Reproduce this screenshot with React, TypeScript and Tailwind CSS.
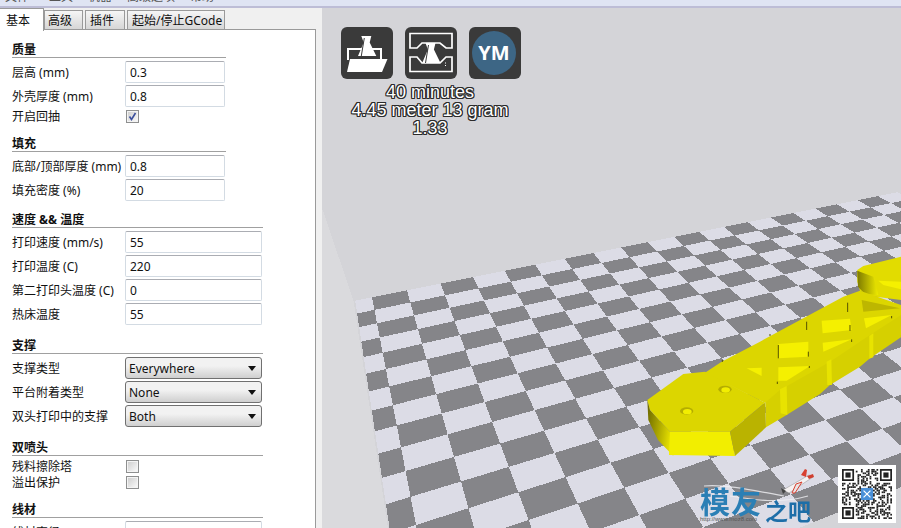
import React from 'react';

const project = (u: number, v: number): [number, number] => {
  // board corners: u 0..7, v 0..12 read off the reference
  const [x0, y0, x1, y1, x2, y2, x3, y3] = [372, 297.3, 593.3, 253, 733, 423.6, 416, 525];
  const dx1 = x1 - x2, dx2 = x3 - x2, sx = x0 - x1 + x2 - x3;
  const dy1 = y1 - y2, dy2 = y3 - y2, sy = y0 - y1 + y2 - y3;
  const den = dx1 * dy2 - dx2 * dy1;
  const g = (sx * dy2 - dx2 * sy) / den;
  const h = (dx1 * sy - sx * dy1) / den;
  const s = u / 7, t = v / 12;
  const w = g * s + h * t + 1;
  return [
    ((x1 - x0 + g * x1) * s + (x3 - x0 + h * x3) * t + x0) / w,
    ((y1 - y0 + g * y1) * s + (y3 - y0 + h * y3) * t + y0) / w,
  ];
};

const quad = (a: number, b: number, c: number, d: number) =>
  [project(a, c), project(b, c), project(b, d), project(a, d)].map((p) => p.join(',')).join(' ');

function Board() {
  const cells = [];
  for (let i = -1; i < 20; i++) {
    for (let j = 0; j < 16; j++) {
      if ((i + j) % 2 !== 0) continue;
      cells.push(<polygon key={`${i}-${j}`} points={quad(Math.max(i, -0.47), i + 1, j, j + 1)} fill="#858589" />);
    }
  }
  return (
    <g shapeRendering="crispEdges">
      <polygon points="322,208 353.5,300.5 388,528 322,528" fill="#dadadd" />
      <polygon points={quad(-0.47, 20, 0, 16)} fill="#dcdce6" />
      {cells}
    </g>
  );
}

function Model() {
  return (
    <g transform="translate(630 250) scale(0.3333)">
      <defs>
        <linearGradient id="leftWall" x1="0" x2="1" y1="0" y2="0.3">
          <stop offset="0" stopColor="#686400" />
          <stop offset="1" stopColor="#e6e000" />
        </linearGradient>
        <linearGradient id="farWall" x1="0" x2="1" y1="0" y2="0">
          <stop offset="0" stopColor="#7d7a00" />
          <stop offset="1" stopColor="#efeb00" />
        </linearGradient>
      </defs>
      {/* far end of the part */}
      <polygon points="682,60 700,48 813,20 813,150 720,138 690,122 682,95" fill="#e2dc00" />
      <polygon points="682,62 730,80 745,135 705,132 684,110" fill="url(#farWall)" />
      <polygon points="745,92 813,95 813,118 760,105" fill="#f5f000" />
      {/* arm side wall */}
      <polygon points="405,430 600,310 720,230 813,170 813,262 720,325 690,350 600,405 570,432 470,495 408,532" fill="#d6d000" />
      {/* arm top */}
      <polygon points="275,335 390,275 520,205 640,140 690,122 813,165 813,195 720,255 600,335 450,420 405,458 225,368" fill="#dcd600" />
      <polygon points="450,418 470,408 472,495 452,490" fill="#e8e300" />
      <polygon points="590,335 604,328 606,405 592,405" fill="#e8e300" />
      <polygon points="718,258 730,250 730,322 718,326" fill="#e8e300" />
      {/* lattice holes */}
      <polygon points="445,282 535,275 535,320 445,325" fill="#f5f000" />
      <polygon points="445,352 540,348 470,392 445,392" fill="#f5f000" />
      <polygon points="575,212 660,206 665,240 578,250" fill="#f5f000" />
      <polygon points="578,278 665,268 580,305" fill="#f5f000" />
      <polygon points="702,205 785,195 708,235" fill="#f5f000" />
      <polygon points="350,355 395,353 395,378" fill="#f5f000" />
      <polygon points="695,150 810,175 700,185" fill="#bdb600" />
      <g stroke="#555200" strokeWidth="3">
        <path d="M445 285V325M535 305V320M442 395V402M538 348V354M660 225V243M665 268V276M785 198V205M653 158V186M530 215V240M277 330V336M420 252V258" />
      </g>
      {/* end plate */}
      <polygon points="52,450 160,372 225,365 405,458 300,545 120,545 60,480" fill="#dcd600" />
      <polygon points="52,450 60,480 120,545 130,618 84,570 55,510" fill="url(#leftWall)" />
      <polygon points="120,545 300,545 315,618 117,615" fill="#f2ee00" />
      <polygon points="300,545 405,458 408,532 315,618" fill="#bab300" />
      <ellipse cx="170" cy="483" rx="20" ry="11" fill="#b4ad00" />
      <ellipse cx="172" cy="485" rx="13" ry="8" fill="#f2ee00" />
      <ellipse cx="285" cy="418" rx="20" ry="11" fill="#b4ad00" />
      <ellipse cx="287" cy="420" rx="13" ry="8" fill="#f2ee00" />
    </g>
  );
}

function Flask({ x, y }: { x: number; y: number }) {
  return (
    <g transform={`translate(${x} ${y})`}>
      <polygon points="0,0 10,0 8.400,6.600 15,20 -3.300,20 2.400,6.600" fill="#fff" />
      <path d="M3 2L0 20" stroke="#3a3a3a" strokeWidth="1" />
    </g>
  );
}

function IconButton({ children }: { children: React.ReactNode }) {
  return <div className="w-[52px] h-[52px] rounded-[6px] bg-[#3a3a3a] relative">{children}</div>;
}

function QrCode() {
  const size = 29;
  const inFinder = (x: number, y: number) => (x < 8 && y < 8) || (x > size - 9 && y < 8) || (x < 8 && y > size - 9);
  const dots = [];
  let seed = 37;
  for (let y = 0; y < size; y++) {
    for (let x = 0; x < size; x++) {
      seed = (seed * 73 + 41) % 1009;
      if (!inFinder(x, y) && seed % 2 === 0) dots.push(<rect key={`${x}-${y}`} x={x} y={y} width="1" height="1" />);
    }
  }
  const finder = (x: number, y: number) => (
    <g transform={`translate(${x} ${y})`} key={`${x}${y}`}>
      <path d="M0 0H7V7H0ZM1 1V6H6V1Z" fillRule="evenodd" />
      <rect x="2" y="2" width="3" height="3" />
    </g>
  );
  return (
    <div className="absolute left-[516px] top-[457px] w-[58px] h-[58px] bg-white p-[4px]">
      <svg viewBox="0 0 29 29" className="w-[50px] h-[50px]" fill="#222">
        {dots}
        {finder(0, 0)}
        {finder(22, 0)}
        {finder(0, 22)}
        <rect x="11" y="11" width="7" height="7" fill="#4a90d8" />
        <path d="M12.5 12.5L16.5 16.5M16.5 12.5L12.5 16.5" stroke="#fff" strokeWidth="0.7" />
      </svg>
    </div>
  );
}

function Watermark() {
  return (
    <>
      <svg viewBox="0 0 130 50" className="absolute left-[378px] top-[458px] w-[130px] h-[50px]">
        <path d="M4 20C30 18 60 26 84 30M30 30C55 34 80 38 108 30" stroke="#f0f0f4" strokeWidth="1.200" fill="none" opacity="0.8" />
        <g transform="translate(81 2)">
          <path d="M2 22L28 7L32 9L8 25Z" fill="#f6f2f2" stroke="#777" strokeWidth="0.4" />
          <path d="M15 16L11 25L14 25L21 14Z" fill="#e8e4e4" stroke="#d84030" strokeWidth="1" />
          <path d="M20 7L24 1L26 2L25 9Z" fill="#d84030" />
          <path d="M0 20L5 23L2 26Z" fill="#444" />
          <path d="M26 8L32 6L33 9L28 11Z" fill="#d04030" />
        </g>
      </svg>
      <span className="absolute left-[378px] top-[477px] text-[30px] leading-[30px] font-bold text-[#2b7fb5] tracking-[1px] font-['Noto_Sans_CJK_SC',sans-serif] blur-[0.4px] whitespace-nowrap">模友</span>
      <span className="absolute left-[443px] top-[490px] text-[23px] leading-[24px] font-bold text-[#1d6ea8] font-['Noto_Sans_CJK_SC',sans-serif] blur-[0.4px] whitespace-nowrap">之吧</span>
      <span className="absolute left-[378px] top-[507px] text-[6px] leading-[8px] text-[#555] font-['Liberation_Sans',sans-serif] whitespace-nowrap">http://www.moz8.com</span>
    </>
  );
}

function Canvas() {
  return (
    <div className="relative flex-1 bg-[#d4d4d8] overflow-hidden">
      <svg viewBox="322 8 579 520" className="absolute inset-0 w-[579px] h-[520px]">
        <Board />
        <Model />
      </svg>
      <div className="absolute left-[19px] top-[19px] flex gap-[12px]">
        <IconButton>
          <svg viewBox="0 0 52 52" className="w-[52px] h-[52px]">
            <path d="M7 33V22H40V33" stroke="#fff" strokeWidth="2" fill="none" />
            <Flask x={20.300} y={9} />
            <polygon points="9,32 46.500,32 41,45 6,45" fill="#fff" />
          </svg>
        </IconButton>
        <IconButton>
          <svg viewBox="0 0 52 52" className="w-[52px] h-[52px]">
            <path d="M5 6.500H47V21H41L35 16H17L12 21H5Z" stroke="#fff" strokeWidth="1.700" fill="none" />
            <path d="M5 30H12L17 36H35L41 30H47V44.500H5Z" stroke="#fff" strokeWidth="1.700" fill="none" />
            <Flask x={20.500} y={16} />
            <path d="M40 36H41M40 38.500H41" stroke="#fff" strokeWidth="1" />
          </svg>
        </IconButton>
        <IconButton>
          <div className="absolute left-[3px] top-[4px] w-[44px] h-[44px] rounded-full bg-[#3d6685] flex items-center justify-center text-white font-bold text-[20px] font-['Open_Sans',sans-serif]">YM</div>
        </IconButton>
      </div>
      <div className="absolute left-[8px] top-[75px] w-[200px] text-center text-[18px] leading-[18px] text-white font-['Liberation_Sans',sans-serif] [text-shadow:1px_0_#2a2a2a,-1px_0_#2a2a2a,0_1px_#2a2a2a,0_-1px_#2a2a2a,1px_1px_#2a2a2a,-1px_-1px_#2a2a2a,1px_-1px_#2a2a2a,-1px_1px_#2a2a2a]">
        <div>40 minutes</div>
        <div>4.45 meter 13 gram</div>
        <div>1.33</div>
      </div>
      <Watermark />
      <QrCode />
    </div>
  );
}

function Check({ checked }: { checked?: boolean }) {
  return (
    <div className="w-[13px] h-[13px] border border-[#8e8f8f] p-[1px] bg-[#f4f4f4]">
      <div className="w-full h-full bg-gradient-to-br from-[#d0d0d0] to-[#f8f8f8] flex items-center justify-center">
        {checked && (
          <svg viewBox="0 0 9 9" className="w-[9px] h-[9px]">
            <path d="M1.500 4.500L3.500 7.500L7.500 1" stroke="#3b4f9c" strokeWidth="1.600" fill="none" />
          </svg>
        )}
      </div>
    </div>
  );
}

function Row({ label, children }: { label: string; children: React.ReactNode }) {
  return (
    <div className="flex items-center h-[24px] pr-[1px]">
      <div className="w-[113px] shrink-0 whitespace-nowrap pt-[2px]">{label}</div>
      {children}
    </div>
  );
}

function Field({ label, value }: { label: string; value: string }) {
  return (
    <Row label={label}>
      <input
        readOnly
        value={value}
        className="flex-1 min-w-0 h-[22px] px-[4px] border border-[#d3dbe3] border-t-[#abadb3] rounded-[2px] bg-white outline-none"
      />
    </Row>
  );
}

function Dropdown({ label, value }: { label: string; value: string }) {
  return (
    <Row label={label}>
      <div className="flex-1 h-[22px] pl-[3px] pr-[5px] flex items-center justify-between border border-[#707070] rounded-[3px] bg-gradient-to-b from-[#f2f2f2] from-40% to-[#cfcfcf]">
        <span className="pt-[1px]">{value}</span>
        <svg viewBox="0 0 8 5" className="w-[8px] h-[5px]">
          <polygon points="0,0 8,0 4,5" fill="#111" />
        </svg>
      </div>
    </Row>
  );
}

function CheckRow({ label, checked }: { label: string; checked?: boolean }) {
  return (
    <div className="flex items-center h-[16px]">
      <div className="w-[114px] shrink-0 pt-[2px]">{label}</div>
      <Check checked={checked} />
    </div>
  );
}

function Section({ title, wide, className, children }: { title: string; wide?: boolean; className: string; children: React.ReactNode }) {
  return (
    <section className={`${wide ? 'w-[251px]' : 'w-[214px]'} ${className}`}>
      <h3 className="h-[16px] leading-[16px] font-bold border-b border-[#a0a0a0] mb-[2px]">{title}</h3>
      {children}
    </section>
  );
}

function Tab({ label, className }: { label: string; className: string }) {
  return (
    <div className={`h-[19px] flex items-center pt-[2px] border border-b-0 border-[#9a9a9a] bg-gradient-to-b from-[#f6f6f6] to-[#d6d6d6] ${className}`}>
      {label}
    </div>
  );
}

function SettingsPane() {
  return (
    <div className="w-[322px] bg-[#f0f0f0] flex flex-col overflow-hidden">
      <div className="h-[21px] flex items-end relative">
        <div className="absolute left-0 top-0 w-[44px] h-[23px] bg-white border-t border-r border-[#9a9a9a] flex items-center pl-[6px] pt-[1px] z-10">基本</div>
        <div className="w-[44px] shrink-0" />
        <div className="flex gap-[2px]">
          <Tab label="高级" className="w-[39px] pl-[3px]" />
          <Tab label="插件" className="w-[40px] pl-[4px]" />
          <Tab label="起始/停止GCode" className="w-[98px] pl-[4px]" />
        </div>
      </div>
      <div className="w-[316px] flex-1 bg-white border-t border-r border-[#9a9a9a] pl-[12px] overflow-hidden">
        <Section title="质量" className="mt-[12px]">
          <Field label="层高 (mm)" value="0.3" />
          <Field label="外壳厚度 (mm)" value="0.8" />
          <CheckRow label="开启回抽" checked />
        </Section>
        <Section title="填充" className="mt-[12px]">
          <Field label="底部/顶部厚度 (mm)" value="0.8" />
          <Field label="填充密度 (%)" value="20" />
        </Section>
        <Section title="速度 && 温度" wide className="mt-[10px]">
          <Field label="打印速度 (mm/s)" value="55" />
          <Field label="打印温度 (C)" value="220" />
          <Field label="第二打印头温度 (C)" value="0" />
          <Field label="热床温度" value="55" />
        </Section>
        <Section title="支撑" wide className="mt-[12px]">
          <Dropdown label="支撑类型" value="Everywhere" />
          <Dropdown label="平台附着类型" value="None" />
          <Dropdown label="双头打印中的支撑" value="Both" />
        </Section>
        <Section title="双喷头" wide className="mt-[12px]">
          <CheckRow label="残料擦除塔" />
          <CheckRow label="溢出保护" />
        </Section>
        <Section title="线材" wide className="mt-[12px]">
          <Field label="线材直径 (mm)" value="1.75" />
        </Section>
      </div>
    </div>
  );
}

export default function App() {
  return (
    <div className="w-[901px] h-[528px] flex flex-col overflow-hidden bg-[#f0f0f0] text-[12px] text-[#111] font-['Noto_Sans','Noto_Sans_CJK_SC',sans-serif]">
      <div className="h-[8px] shrink-0 bg-[#dfe4f3] border-b-2 border-[#bdbdd6] overflow-hidden">
        <div className="flex -mt-[10px] text-[#555] leading-[14px]">
          <span className="ml-[5px]">文件</span>
          <span className="ml-[20px]">工具</span>
          <span className="ml-[15px]">机器</span>
          <span className="ml-[15px]">高级选项</span>
          <span className="ml-[15px]">帮助</span>
        </div>
      </div>
      <div className="flex-1 flex min-h-0">
        <SettingsPane />
        <Canvas />
      </div>
    </div>
  );
}
